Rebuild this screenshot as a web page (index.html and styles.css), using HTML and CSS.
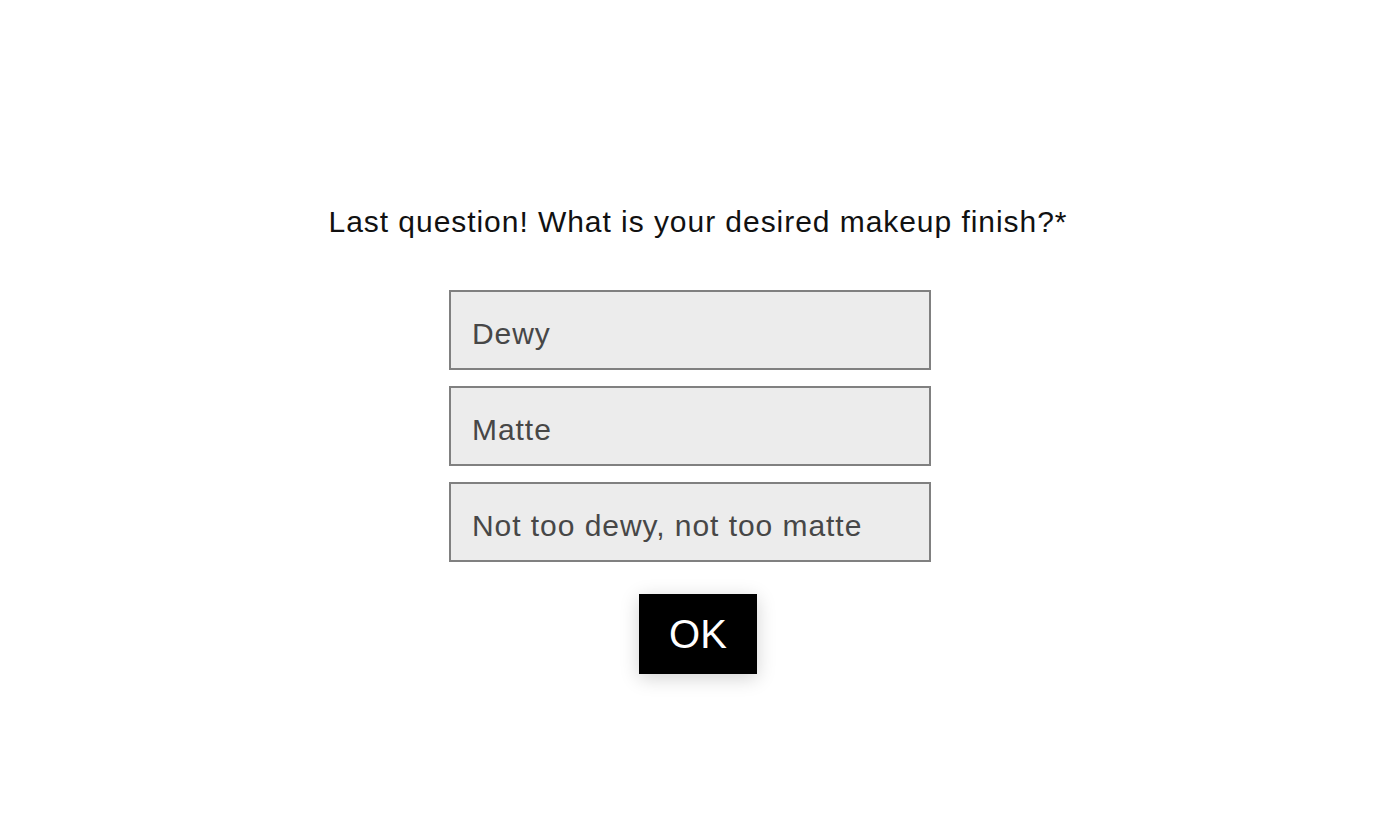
FILE: index.html
```html
<!DOCTYPE html>
<html lang="en">
<head>
<meta charset="utf-8">
<title>Quiz</title>
<link rel="stylesheet" href="styles.css">
</head>
<body>
<main class="quiz">
  <h1 class="question">Last question! What is your desired makeup finish?*</h1>
  <div class="options">
    <button class="option" type="button">Dewy</button>
    <button class="option" type="button">Matte</button>
    <button class="option" type="button">Not too dewy, not too matte</button>
  </div>
  <button class="ok" type="button">OK</button>
</main>
</body>
</html>
```
FILE: styles.css
```css
html, body {
  margin: 0;
  padding: 0;
  background: #ffffff;
}
body {
  font-family: "Liberation Sans", Arial, sans-serif;
  width: 1376px;
  height: 836px;
  overflow: hidden;
}
.quiz {
  display: flex;
  flex-direction: column;
  align-items: center;
  padding-top: 200px;
}
.question {
  margin: 0 0 0 20px;
  font-weight: 400;
  font-size: 30px;
  line-height: 44px;
  color: #111;
  letter-spacing: 0.95px;
}
.options {
  margin-top: 46px;
  display: flex;
  flex-direction: column;
  gap: 16px;
  margin-left: 4px;
}
.option {
  box-sizing: border-box;
  width: 482px;
  height: 80px;
  background: #ececec;
  border: 2px solid #808080;
  border-radius: 0;
  padding: 7px 0 0 21px;
  text-align: left;
  font-family: inherit;
  font-size: 30px;
  letter-spacing: 0.95px;
  color: #474747;
  cursor: pointer;
}
.ok {
  margin-top: 32px;
  margin-left: 20px;
  width: 118px;
  height: 80px;
  border: none;
  background: #000;
  color: #fff;
  font-family: inherit;
  font-size: 40px;
  padding: 0;
  box-shadow: 0 4px 18px rgba(0,0,0,0.18);
  cursor: pointer;
}
```
